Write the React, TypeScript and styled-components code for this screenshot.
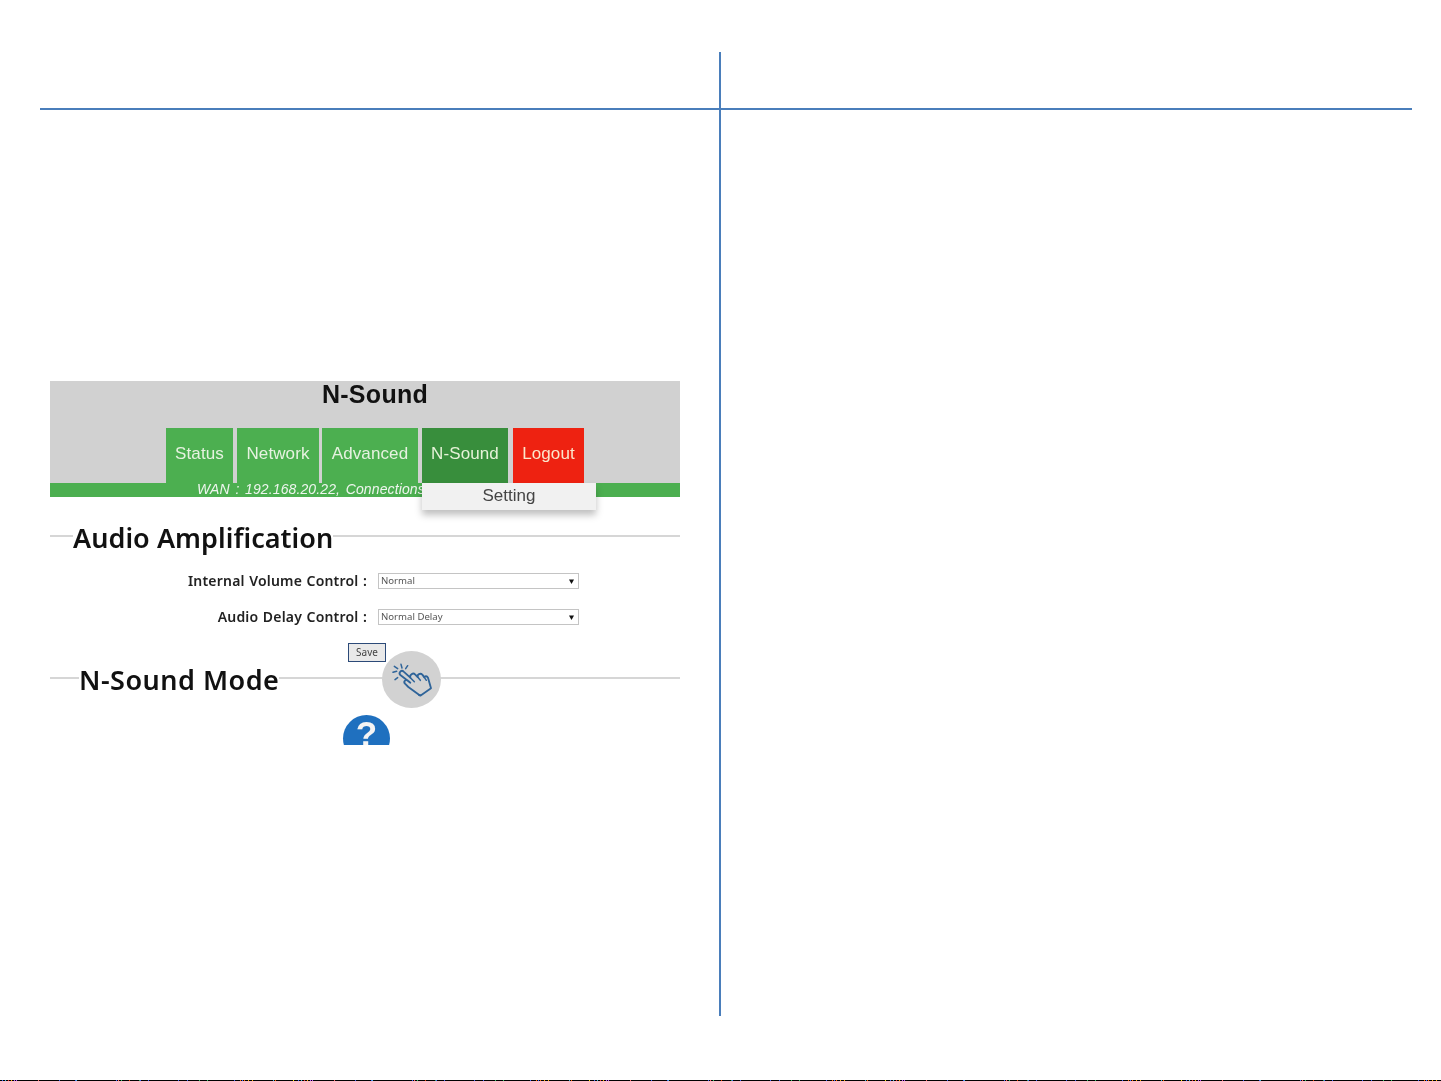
import React from "react";
import styled, { createGlobalStyle } from "styled-components";

const Global = createGlobalStyle`
  html, body { margin: 0; padding: 0; background: #fff; overflow: hidden; }
`;

const Page = styled.div`
  width: 1441px;
  height: 1081px;
  display: flex;
  flex-direction: column;
  background: #fff;
`;

const Sheet = styled.div`
  display: grid;
  grid-template-columns: 679px 693px;
  height: 964px;
  margin: 52px 0 0 40px;
`;

const Column = styled.section<{ $rule?: boolean }>`
  box-sizing: border-box;
  ${(p) => (p.$rule ? "position: relative;" : "")}
`;

const VerticalRule = styled.div`
  position: absolute;
  left: 0;
  top: 0;
  bottom: 0;
  width: 2px;
  background: #4a7ebb;
`;

const ColumnHeader = styled.div`
  box-sizing: border-box;
  height: 58px;
  border-bottom: 2px solid #4a7ebb;
`;

const Shot = styled.figure`
  position: relative;
  width: 630px;
  height: 364px;
  margin: 271px 0 0 10px;
  overflow: hidden;
  background: #fff;
  filter: blur(0.6px);
`;

const TitleBar = styled.header`
  height: 102px;
  background: #d1d1d1;
  display: flex;
  flex-direction: column;
`;

const Title = styled.h1`
  margin: 0;
  height: 47px;
  padding-left: 20px;
  text-align: center;
  font: bold 25px/27px "Liberation Sans", Arial, sans-serif;
  letter-spacing: 0.3px;
  color: #111;
`;

const Tabs = styled.nav`
  display: flex;
  height: 55px;
  padding-left: 116px;
`;

const Tab = styled.div<{ $w: number; $gap: number; $bg: string; $ink: string }>`
  width: ${(p) => p.$w}px;
  margin-right: ${(p) => p.$gap}px;
  padding-bottom: 4px;
  box-sizing: border-box;
  background: ${(p) => p.$bg};
  display: flex;
  align-items: center;
  justify-content: center;
  font: 17px "Liberation Sans", Arial, sans-serif;
  letter-spacing: 0.1px;
  color: ${(p) => p.$ink};
`;

const StatusBar = styled.div`
  height: 14px;
  background: #4caf50;
  padding-left: 147px;
  font: italic 14px/13px "Liberation Sans", Arial, sans-serif;
  letter-spacing: 0.12px;
  word-spacing: 1.6px;
  color: #eef5ee;
  white-space: nowrap;
`;

const Menu = styled.div`
  position: absolute;
  left: 372px;
  top: 102px;
  width: 174px;
  height: 27px;
  background: #f1f1f1;
  box-shadow: 0 5px 7px rgba(0, 0, 0, 0.25);
  text-align: center;
  font: 17px/25px "Liberation Sans", Arial, sans-serif;
  color: #444;
`;

const Legend = styled.div<{ $indent: number; $top: number; $spacing: number }>`
  display: flex;
  align-items: center;
  height: 36px;
  margin-top: ${(p) => p.$top}px;
  &::before, &::after {
    content: "";
    height: 2px;
    background: #d6d6d6;
    position: relative;
    top: -2px;
  }
  &::before { width: ${(p) => p.$indent}px; flex: none; }
  &::after { flex: 1; }
  span {
    font: 600 27px/36px "Noto Sans", sans-serif;
    letter-spacing: ${(p) => p.$spacing}px;
    color: #111;
    white-space: nowrap;
  }
`;

const FormRow = styled.div<{ $top: number }>`
  display: flex;
  align-items: center;
  height: 16px;
  margin-top: ${(p) => p.$top}px;
`;

const Label = styled.label`
  width: 317px;
  text-align: right;
  font: 600 14px/16px "Noto Sans", sans-serif;
  letter-spacing: 0.2px;
  word-spacing: 0.6px;
  color: #222;
  white-space: nowrap;
`;

const SelectBox = styled.div`
  box-sizing: border-box;
  width: 201px;
  height: 16px;
  margin-left: 11px;
  padding: 0 4px 0 2px;
  border: 1px solid #c4c4c4;
  background: #fff;
  display: flex;
  align-items: center;
  justify-content: space-between;
  font: 9.6px/14px "Noto Sans", sans-serif;
  color: #555;
`;

const Caret = styled.svg`
  width: 5px;
  height: 5px;
  fill: #111;
`;

const SaveButton = styled.button`
  display: block;
  box-sizing: border-box;
  width: 38px;
  height: 19px;
  margin: 18px 0 0 298px;
  padding: 0 0 2px;
  border: 1.5px solid #2c4a78;
  background: #e9e9e9;
  font: 10px "Noto Sans", sans-serif;
  color: #444;
`;

const TouchBadge = styled.div`
  position: absolute;
  left: 332px;
  top: 270px;
  width: 59px;
  height: 57px;
  border-radius: 50%;
  background: #d2d2d2;
`;

const HandSvg = styled.svg`
  display: block;
  width: 59px;
  height: 57px;
`;

const HelpBadge = styled.div`
  width: 47px;
  height: 47px;
  margin: 17px 0 0 293px;
  border-radius: 50%;
  background: #1f70bf;
  text-align: center;
  font: bold 35px/38px "Liberation Sans", Arial, sans-serif;
  color: #f4f4f4;
`;

const Noise = styled.div`
  margin-top: auto;
  height: 1px;
`;

const specks: [number, string][] = [
  [2, "#3a6cff"], [5, "#4bd"], [8, "#e33"], [11, "#fa0"], [14, "#b5f"], [16, "#b5f"],
  [38, "#f66"], [59, "#46f"], [75, "#46f"], [76, "#4bd"], [116, "#46f"], [118, "#f66"],
  [121, "#3c6"], [129, "#e40"], [139, "#3a6"], [140, "#46f"], [148, "#46f"], [178, "#46f"],
  [187, "#46f"], [199, "#3c6"], [207, "#3c6"], [234, "#46f"], [240, "#f60"], [242, "#46f"],
  [244, "#f60"], [248, "#fa0"], [252, "#fa0"], [273, "#4bd"], [275, "#f60"], [293, "#fe0"],
];

function noiseBackground() {
  const stops: string[] = [];
  for (let repeat = 0; repeat < 5; repeat++) {
    for (const [x, c] of specks) {
      const at = x + repeat * 296;
      stops.push(`#000 ${at}px`, `${c} ${at}px`, `${c} ${at + 1}px`, `#000 ${at + 1}px`);
    }
  }
  return `linear-gradient(90deg, ${stops.join(", ")})`;
}

function HandIcon() {
  return (
    <HandSvg viewBox="21 18 177 171" fill="none" stroke="#2f6499" strokeWidth="5.500" strokeLinecap="round" strokeLinejoin="round">
      <path d="M76 90a7 7 0 0 1 10-10L106 98c-3-8 8-16 14-10l8 8c-2-8 8-13 14-7l6 8c2-5 8-4 11 1l9 32-32 22-36-26-10-10c-6-7 3-15 9-9l7 6z" />
      <path d="M135 150l-4 0M106 98l12 12M128 96l8 10M148 97l6 9" strokeWidth="4.500" />
      <path d="M58 64l10 7M54 82l11-3M78 58l3 11M98 62l-6 9M60 104l8-6" strokeWidth="4.500" />
    </HandSvg>
  );
}

const tabs = [
  { label: "Status", w: 67, gap: 4, bg: "#4caf50", ink: "#e6f2e0" },
  { label: "Network", w: 82, gap: 3, bg: "#4caf50", ink: "#e6f2e0" },
  { label: "Advanced", w: 96, gap: 4, bg: "#4caf50", ink: "#e6f2e0" },
  { label: "N-Sound", w: 86, gap: 5, bg: "#388e3c", ink: "#e6f2d8" },
  { label: "Logout", w: 71, gap: 0, bg: "#ee2211", ink: "#fbe6cc" },
];

function Select({ value }: { value: string }) {
  return (
    <SelectBox>
      {value}
      <Caret viewBox="0 0 10 10"><path d="M0 1h10L5 10z" /></Caret>
    </SelectBox>
  );
}

export default function App() {
  return (
    <Page>
      <Global />
      <Sheet>
        <Column>
          <ColumnHeader />
          <Shot>
            <TitleBar>
              <Title>N-Sound</Title>
              <Tabs>
                {tabs.map((t) => (
                  <Tab key={t.label} $w={t.w} $gap={t.gap} $bg={t.bg} $ink={t.ink}>{t.label}</Tab>
                ))}
              </Tabs>
            </TitleBar>
            <StatusBar>WAN : 192.168.20.22, Connections</StatusBar>
            <Menu>Setting</Menu>
            <Legend $indent={23} $top={23} $spacing={0.05}><span>Audio Amplification</span></Legend>
            <FormRow $top={17}>
              <Label>Internal Volume Control :</Label>
              <Select value="Normal" />
            </FormRow>
            <FormRow $top={20}>
              <Label>Audio Delay Control :</Label>
              <Select value="Normal Delay" />
            </FormRow>
            <SaveButton>Save</SaveButton>
            <Legend $indent={29} $top={0} $spacing={0.5}><span>N-Sound Mode</span></Legend>
            <TouchBadge><HandIcon /></TouchBadge>
            <HelpBadge>?</HelpBadge>
          </Shot>
        </Column>
        <Column $rule>
          <ColumnHeader />
          <VerticalRule />
        </Column>
      </Sheet>
      <Noise style={{ background: noiseBackground() }} />
    </Page>
  );
}
